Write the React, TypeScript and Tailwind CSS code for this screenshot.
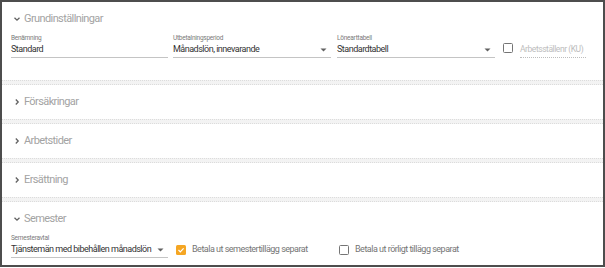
import React from 'react';

function Chevron({ open }: { open: boolean }) {
  return (
    <svg width="8" height="8" viewBox="0 0 8 8" className="shrink-0 text-[#616161]">
      {open ? (
        <polyline points="1.5,2.8 4,5.2 6.5,2.8" fill="none" stroke="currentColor" strokeWidth="1.3" />
      ) : (
        <polyline points="2.8,1.5 5.2,4 2.8,6.5" fill="none" stroke="currentColor" strokeWidth="1.3" />
      )}
    </svg>
  );
}

function Caret() {
  return (
    <svg width="7" height="4" viewBox="0 0 7 4" className="mr-[4px] shrink-0 text-[#616161]">
      <polygon points="0.5,0.5 6.5,0.5 3.5,3.5" fill="currentColor" />
    </svg>
  );
}

function Header({ title, open }: { title: string; open: boolean }) {
  return (
    <div
      className={`flex items-center gap-[3px] pl-[11px] text-[11px] tracking-[-0.6px] text-[#a3a3a3] ${
        open ? 'h-[30px] pt-[4px]' : 'h-[34px]'
      }`}
    >
      <Chevron open={open} />
      <span>{title}</span>
    </div>
  );
}

function Field({
  label,
  value,
  select,
  className,
}: {
  label: string;
  value: string;
  select?: boolean;
  className: string;
}) {
  return (
    <div className={`flex flex-col ${className}`}>
      <div className="mt-[2px] h-[8px] whitespace-nowrap text-[6.5px] leading-[8px] tracking-[-0.25px] text-[#7a7a7a]">
        {label}
      </div>
      <div className="flex h-[16px] items-center justify-between border-b border-[#c4c4c4] text-[9px] tracking-[-0.5px] text-[#333]">
        <span className="whitespace-nowrap">{value}</span>
        {select && <Caret />}
      </div>
    </div>
  );
}

function Band() {
  return <div className="h-[5px] border-y border-dotted border-[#dcdcdc] bg-[#f3f3f3]" />;
}

function Checkbox({ checked }: { checked?: boolean }) {
  if (checked) {
    return (
      <span className="flex h-[10px] w-[10px] shrink-0 items-center justify-center rounded-[1.5px] bg-[#f5a623]">
        <svg width="8" height="8" viewBox="0 0 8 8">
          <polyline points="1.5,4 3.3,5.8 6.6,2.3" fill="none" stroke="#fff" strokeWidth="1.2" />
        </svg>
      </span>
    );
  }
  return <span className="block h-[10px] w-[10px] shrink-0 rounded-[1.5px] border-[1.5px] border-[#757575]" />;
}

export default function App() {
  return (
    <div className="h-[267px] w-[605px] border-2 border-[#4d4d4d] bg-white font-['Roboto',sans-serif]">
      <section className="h-[78px]">
        <Header title="Grundinställningar" open />
        <div className="flex items-end pl-[9px]">
          <Field className="w-[157px]" label="Benämning" value="Standard" />
          <Field className="ml-[5px] w-[158px]" label="Utbetalningsperiod" value="Månadslön, innevarande" select />
          <Field className="ml-[6px] w-[158px]" label="Lönearttabell" value="Standardtabell" select />
          <div className="mb-[5px] ml-[8px]">
            <Checkbox />
          </div>
          <div className="ml-[7px] flex h-[16px] w-[66px] items-center whitespace-nowrap border-b border-dotted border-[#bdbdbd] text-[8.5px] tracking-[-0.45px] text-[#bdbdbd]">
            Arbetsställenr (KU)
          </div>
        </div>
      </section>
      <Band />
      <Header title="Försäkringar" open={false} />
      <Band />
      <Header title="Arbetstider" open={false} />
      <Band />
      <Header title="Ersättning" open={false} />
      <Band />
      <section>
        <Header title="Semester" open />
        <div className="flex items-end pl-[9px]">
          <Field className="w-[157px]" label="Semesteravtal" value="Tjänstemän med bibehållen månadslön" select />
          <div className="ml-[8px] flex h-[16px] w-[163px] items-center gap-[6px] whitespace-nowrap text-[9px] tracking-[-0.5px] text-[#757575]">
            <Checkbox checked />
            <span>Betala ut semestertillägg separat</span>
          </div>
          <div className="flex h-[16px] items-center gap-[6px] whitespace-nowrap text-[9px] tracking-[-0.5px] text-[#757575]">
            <Checkbox />
            <span>Betala ut rörligt tillägg separat</span>
          </div>
        </div>
      </section>
    </div>
  );
}
